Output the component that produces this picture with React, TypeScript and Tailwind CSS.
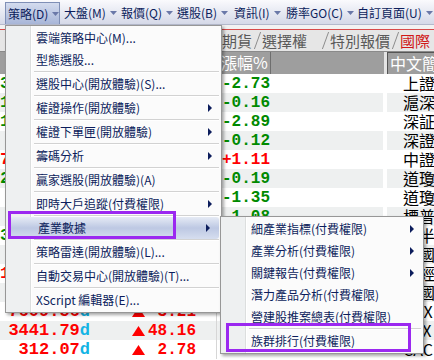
import React from 'react';

const cjk = "font-['Noto_Sans_CJK_TC',sans-serif]";
const num = "font-['Liberation_Mono',monospace] font-bold";

const topMenus = [
  { t: '策略(D)', w: 'w-[55px] mr-[2px]' },
  { t: '大盤(M)', w: 'w-[57px]' },
  { t: '報價(Q)', w: 'w-[56px]' },
  { t: '選股(B)', w: 'w-[57px]' },
  { t: '資訊(I)', w: 'w-[52px]' },
  { t: '勝率GO(C)', w: 'w-[71px]' },
  { t: '自訂頁面(U)', w: 'w-[80px]' },
];

const tabs = [
  { t: '期貨', w: 'w-[40px]' },
  { t: '選擇權', w: 'w-[68px]' },
  { t: '特別報價', w: 'w-[70px]' },
  { t: '國際', w: 'w-[40px]' },
];

type MenuItem = { label: string; sub?: boolean; sep?: boolean; active?: boolean };

const mainItems: MenuItem[] = [
  { label: '雲端策略中心(M)...' },
  { label: '型態選股...', sep: true },
  { label: '選股中心(開放體驗)(S)...', sep: true },
  { label: '權證操作(開放體驗)', sub: true, sep: true },
  { label: '權證下單匣(開放體驗)', sub: true, sep: true },
  { label: '籌碼分析', sub: true, sep: true },
  { label: '贏家選股(開放體驗)(A)', sep: true },
  { label: '即時大戶追蹤(付費權限)', sub: true, sep: true },
  { label: '產業數據', sub: true, active: true, sep: true },
  { label: '策略雷達(開放體驗)(L)...', sep: true },
  { label: '自動交易中心(開放體驗)(T)...', sep: true },
  { label: 'XScript 編輯器(E)...' },
];

const subItems: MenuItem[] = [
  { label: '細產業指標(付費權限)', sub: true },
  { label: '產業分析(付費權限)', sub: true },
  { label: '關鍵報告(付費權限)', sub: true },
  { label: '潛力產品分析(付費權限)' },
  { label: '營建股推案總表(付費權限)', sep: true },
  { label: '族群排行(付費權限)' },
];

const rows = [
  { p: '31347.11d', pc: 'text-[#008a00]', c: '94.40', pct: '-2.73', name: '上證' },
  { p: '13921.61d', pc: 'text-[#008a00]', c: '6.21', pct: '-0.16', name: '滬深' },
  { p: '10958.37d', pc: 'text-[#008a00]', c: '32.55', pct: '-2.89', name: '深証' },
  { p: '2124.70d', pc: 'text-[#008a00]', c: '2.55', pct: '-0.12', name: '深證' },
  { p: '75420.10d', pc: 'text-[#ff0000]', c: '82.64', pct: '+1.11', name: '中證' },
  { p: '22764.02d', pc: 'text-[#008a00]', c: '43.10', pct: '-0.19', name: '道瓊' },
  { p: '9261.53d', pc: 'text-[#008a00]', c: '12.60', pct: '-1.35', name: '道瓊' },
  { p: '4952.24d', pc: 'text-[#008a00]', c: '9.85', pct: '-1.08', name: '標普' },
  { p: '31216.52d', pc: 'text-[#008a00]', c: '21.00', pct: '-0.91', name: '費半' },
  { p: '6725.34d', pc: 'text-[#008a00]', c: '3.20', pct: '-0.40', name: '英國' },
  { p: '12310.42d', pc: 'text-[#ff0000]', c: '11.20', pct: '+0.33', name: '日經' },
  { p: '5226.18d', pc: 'text-[#ff0000]', c: '5.02', pct: '+0.21', name: '韓國' },
  { p: '7609.56d', pc: 'text-[#ff0000]', c: '3.21', pct: '+0.04', name: 'DAX' },
  { p: '3441.79d', pc: 'text-[#ff0000]', c: '48.16', pct: '+1.42', name: 'ASX' },
  { p: '312.07d', pc: 'text-[#ff0000]', c: '2.78', pct: '+0.90', name: 'CAC' },
];

function Caret() {
  return (
    <svg width="7" height="4" viewBox="0 0 7 4" className="ml-[4px] shrink-0">
      <path d="M0 0H7L3.5 4Z" fill="#6a78a8" />
    </svg>
  );
}

function SubArrow() {
  return (
    <svg width="4" height="8" viewBox="0 0 4 8" className="shrink-0">
      <path d="M0 0L4 4L0 8Z" fill="#0c1d5c" />
    </svg>
  );
}

function Up() {
  return (
    <svg width="13" height="10" viewBox="0 0 13 10" className="mr-[3px] shrink-0">
      <path d="M6.5 0L13 10H0Z" fill="#ff0000" />
    </svg>
  );
}

function MenuBar() {
  return (
    <div className={`h-[25px] flex items-end pl-[5px] overflow-hidden bg-gradient-to-b from-[#fafafd] to-[#d5d9e8] border-b border-[#b4b9cc] ${cjk}`}>
      {topMenus.map((m, i) => (
        <div
          key={m.t}
          className={`h-[22px] shrink-0 whitespace-nowrap flex items-center pl-[2px] text-[12px] text-[#0c1d5c] ${m.w} ${
            i === 0 ? 'bg-gradient-to-b from-[#d3dbee] to-[#a8b6d8] border border-b-0 border-[#7f8fb6]' : ''
          }`}
        >
          {m.t}
          <Caret />
        </div>
      ))}
    </div>
  );
}

function Tabs() {
  return (
    <div className={`h-[27px] bg-[#f2f2f2] ${cjk}`}>
      <div className="h-[4px]" />
      <div className="h-px bg-[#d84a4a]" />
      <div className="h-[22px] bg-[#e6e6e6] flex items-center pl-[222px] overflow-hidden text-[15px] text-[#5a5a5a] border-b border-[#8a8a8a]">
        {tabs.map((t, i) => (
          <div key={t.t} className={`shrink-0 flex items-center justify-between ${t.w}`}>
            <span className={`whitespace-nowrap leading-[22px] ${i === 3 ? 'text-[#d01818]' : ''}`}>{t.t}</span>
            {i < 3 && <div className="w-px h-[17px] mr-[4px] bg-[#8c8c8c] skew-x-[-20deg]" />}
          </div>
        ))}
      </div>
    </div>
  );
}

function Table() {
  return (
    <div>
      <div className={`h-[22px] bg-[#9e9e9e] flex text-white text-[16px] ${cjk}`}>
        <div className="w-[218px]" />
        <div className="w-[53px] border-x border-[#6e6e6e] pl-[2px] leading-[21px] whitespace-nowrap">漲幅%</div>
        <div className="w-[113px]" />
        <div className="w-[3px] bg-[#e4e4e4]" />
        <div className="flex-1 border-l border-t border-[#555] pl-[2px] leading-[20px] whitespace-nowrap overflow-hidden">中文簡稱</div>
      </div>
      {rows.map((r, i) => {
        const up = r.pct.startsWith('+');
        return (
          <div key={i} className={`h-[19px] flex items-center ${i % 2 ? 'bg-[#eef0f0]' : 'bg-white'}`}>
            <div className={`w-[90px] shrink-0 text-right whitespace-nowrap text-[17px] ${num} ${r.pc}`}>
              {r.p.slice(0, -1)}
              <span className="text-[#12b4e4]">d</span>
            </div>
            <div className={`w-[106px] shrink-0 flex items-center justify-end text-[16px] ${num} ${r.pc}`}>
              <Up />
              <span className="w-[48px] text-right whitespace-pre">{r.c.padStart(5, ' ')}</span>
            </div>
            <div className="w-[21px] shrink-0 h-full border-r border-[#d6d6d6]" />
            <div className={`w-[53px] shrink-0 text-right text-[16px] ${num} ${up ? 'text-[#ff0000]' : 'text-[#008a00]'}`}>{r.pct}</div>
            <div className="w-[113px] shrink-0" />
            <div className="w-[4px] shrink-0 h-full bg-white" />
            <div className={`flex-1 pl-[16px] text-[16px] text-black leading-[19px] whitespace-nowrap overflow-hidden ${cjk}`}>{r.name}</div>
          </div>
        );
      })}
    </div>
  );
}

function Menu({ items, width, className }: { items: MenuItem[]; width: string; className: string }) {
  return (
    <div
      className={`absolute ${width} ${className} py-px border border-[#979797] shadow-[2px_2px_3px_rgba(0,0,0,0.35)] bg-[linear-gradient(to_right,#eef0f1_24px,#dcdede_24px,#dcdede_25px,#ffffff_25px,#ffffff_26px,#fbfbfb_26px)] ${cjk}`}
    >
      {items.map((it) => (
        <React.Fragment key={it.label}>
          <div
            className={`h-[22px] flex items-center justify-between pl-[30px] pr-[9px] text-[12px] text-[#0c1d5c] ${
              it.active ? 'mx-[2px] pl-[28px] pr-[7px] rounded-[3px] bg-gradient-to-b from-[#e6ebf5] via-[#bdc8e3] to-[#d6deef]' : ''
            }`}
          >
            <span className="whitespace-nowrap">{it.label}</span>
            {it.sub && <SubArrow />}
          </div>
          {it.sep && <div className="ml-[28px] mr-[2px] h-[2px] border-t border-[#d2d2d2] border-b border-b-white" />}
        </React.Fragment>
      ))}
    </div>
  );
}

export default function App() {
  return (
    <div className="relative w-[434px] h-[360px] overflow-hidden bg-white">
      <MenuBar />
      <Tabs />
      <Table />
      <Menu items={mainItems} width="w-[217px]" className="left-[5px] top-[25px]" />
      <Menu items={subItems} width="w-[204px]" className="left-[220px] top-[216px]" />
      <div className="absolute left-[8px] top-[211px] w-[168px] h-[28px] border-[3px] border-[#9b28f0]" />
      <div className="absolute left-[226px] top-[323px] w-[185px] h-[29px] border-[3px] border-[#9b28f0]" />
    </div>
  );
}
